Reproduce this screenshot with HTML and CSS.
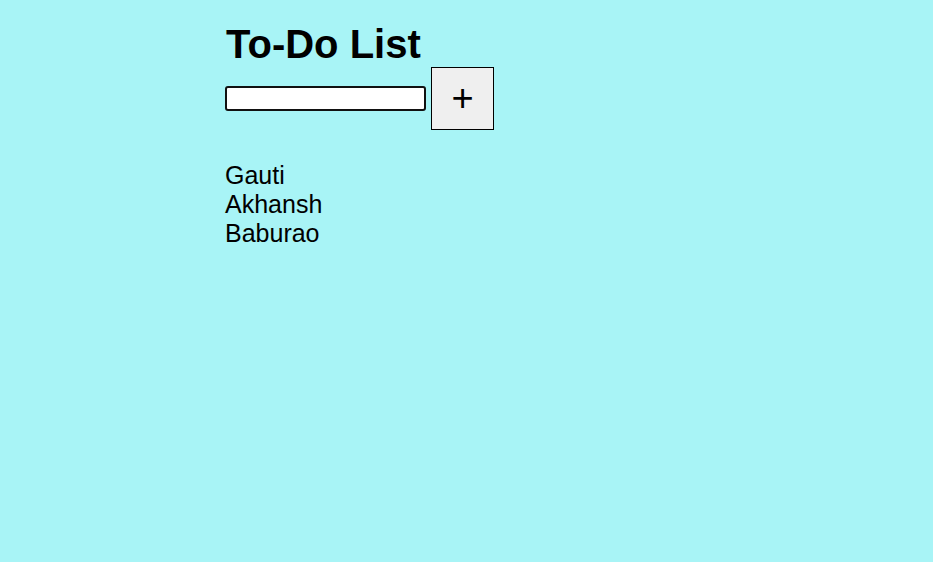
FILE: index.html
```html
<!DOCTYPE html>
<html>
<head>
<meta charset="utf-8">
<link rel="stylesheet" href="styles.css">
</head>
<body>
<div class="app">
  <h1 class="title">To-Do List</h1>
  <div class="add-row">
    <input class="task-input" type="text">
    <button class="add-btn">+</button>
  </div>
  <ul class="tasks">
    <li>Gauti</li>
    <li>Akhansh</li>
    <li>Baburao</li>
  </ul>
</div>
</body>
</html>
```
FILE: styles.css
```css
html, body {
  margin: 0;
  padding: 0;
  background: #a8f4f6;
  font-family: "Liberation Sans", Arial, sans-serif;
  color: #000;
}
.app {
  padding: 22px 0 0 225px;
}
.title {
  margin: 0;
  font-size: 40px;
  font-weight: bold;
  line-height: 45px;
  padding-left: 1px;
}
.add-row {
  display: flex;
  align-items: center;
  gap: 5px;
}
.task-input {
  box-sizing: border-box;
  width: 201px;
  height: 25px;
  margin: 0;
  border: 2px solid #111;
  border-radius: 3px;
  background: #fff;
  padding: 0 4px;
}
.add-btn {
  box-sizing: border-box;
  width: 63px;
  height: 63px;
  margin: 0;
  border: 1px solid #000;
  background: #efefef;
  font-family: "Liberation Sans", Arial, sans-serif;
  font-size: 38px;
  line-height: 1;
  color: #000;
  padding: 0 0 2px;
}
.tasks {
  list-style: none;
  margin: 31px 0 0;
  padding: 0;
  font-size: 25px;
  line-height: 29px;
}
```
